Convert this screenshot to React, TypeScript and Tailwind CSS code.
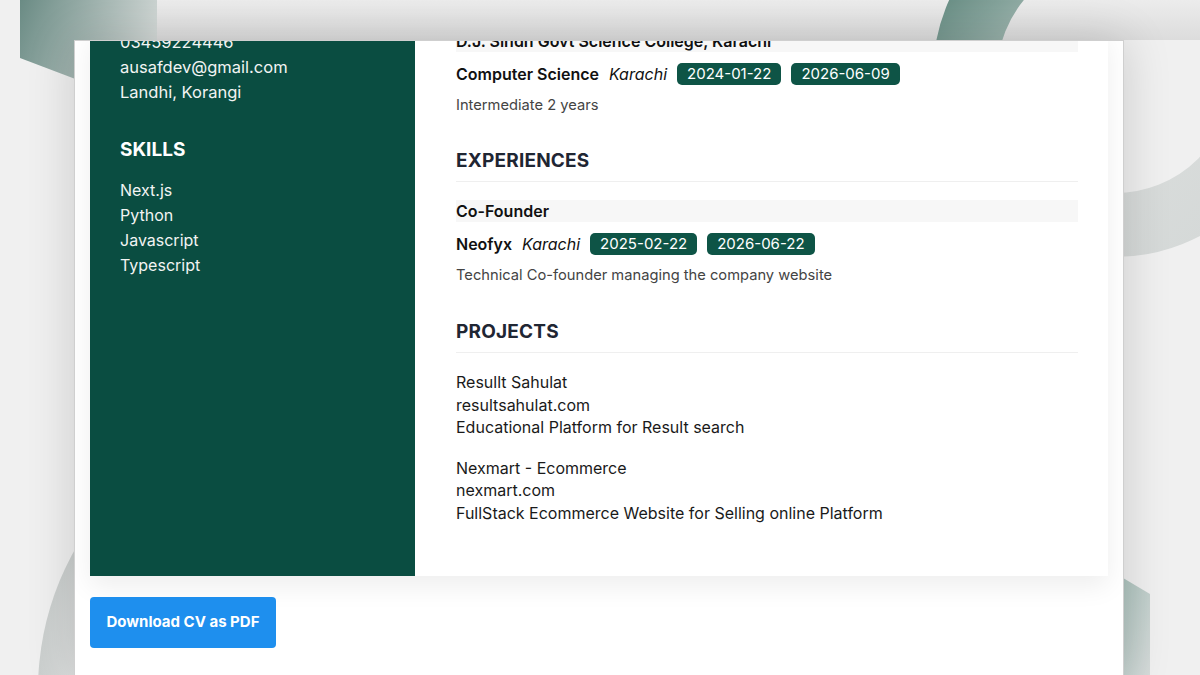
const contact = ["03459224446", "ausafdev@gmail.com", "Landhi, Korangi"];
const skills = ["Next.js", "Python", "Javascript", "Typescript"];

const projects = [
  {
    name: "Resullt Sahulat",
    url: "resultsahulat.com",
    desc: "Educational Platform for Result search",
  },
  {
    name: "Nexmart - Ecommerce",
    url: "nexmart.com",
    desc: "FullStack Ecommerce Website for Selling online Platform",
  },
];

function Backdrop() {
  return (
    <svg
      className="absolute inset-0 pointer-events-none"
      width="1200"
      height="675"
      viewBox="0 0 1200 675"
    >
      <defs>
        <linearGradient id="tl" x1="0" y1="0" x2="1" y2="0.3">
          <stop offset="0" stopColor="#6a8b84" />
          <stop offset="1" stopColor="#d3d9d7" />
        </linearGradient>
        <linearGradient id="ring" x1="0" y1="0" x2="1" y2="1">
          <stop offset="0" stopColor="#4f7c71" />
          <stop offset="0.3" stopColor="#a6bbb5" />
          <stop offset="0.6" stopColor="#dadddc" />
          <stop offset="1" stopColor="#d4d8d7" />
        </linearGradient>
        <radialGradient id="bl" cx="0.5" cy="0.5" r="0.5">
          <stop offset="0.8" stopColor="#e7e8e8" />
          <stop offset="1" stopColor="#cbcfce" />
        </radialGradient>
        <linearGradient id="br" x1="0" y1="0" x2="1" y2="1">
          <stop offset="0" stopColor="#a9c1bb" />
          <stop offset="1" stopColor="#d6dbda" />
        </linearGradient>
        <linearGradient id="top" x1="0" y1="0" x2="0" y2="1">
          <stop offset="0" stopColor="#ececec" />
          <stop offset="1" stopColor="#dcdcdc" />
        </linearGradient>
      </defs>
      <rect x="157" y="0" width="1043" height="40" fill="url(#top)" />
      <polygon points="20,0 157,0 157,110 20,58" fill="url(#tl)" />
      <circle cx="1115" cy="75" r="150" fill="none" stroke="url(#ring)" strokeWidth="64" />
      <circle cx="324" cy="690" r="286" fill="url(#bl)" />
      <polygon points="1118,575 1150,594 1150,675 1118,675" fill="url(#br)" />
    </svg>
  );
}

function Badge({ children }: { children: string }) {
  return (
    <span className="rounded-[5px] bg-[#0e5446] px-[10px] text-[15px] leading-[22px] text-white">
      {children}
    </span>
  );
}

function Heading({ children }: { children: string }) {
  return (
    <h2 className="border-b border-[#efefef] pb-[8px] text-[19px] font-bold leading-[24px] tracking-[0.2px] text-[#1f2633]">
      {children}
    </h2>
  );
}

export default function App() {
  return (
    <div
      className="relative h-[675px] w-[1200px] overflow-hidden bg-[#f0f0f0]"
      style={{ fontFamily: "Inter, 'Noto Sans', sans-serif" }}
    >
      <Backdrop />
      <div className="relative pl-[74px] pt-[40px]">
        <div className="h-[640px] w-[1050px] overflow-hidden border-l border-r border-t border-[#cfcfcf] bg-white px-[15px] shadow-[0_0_45px_rgba(0,0,0,0.16)]">
          {/* cv sheet, scrolled down a bit */}
          <div className="-mt-[11px] flex w-[1018px] shadow-[0_10px_25px_rgba(0,0,0,0.07)]">
            <aside className="w-[325px] shrink-0 bg-[#0a4d41] px-[30px] text-[#f2f4f3]">
              <ul className="text-[16.5px] leading-[25px]">
                {contact.map((c) => (
                  <li key={c}>{c}</li>
                ))}
              </ul>
              <h3 className="mt-[31px] text-[19px] font-bold leading-[28px] text-white">
                SKILLS
              </h3>
              <ul className="mt-[14px] text-[16px] leading-[25px]">
                {skills.map((s) => (
                  <li key={s}>{s}</li>
                ))}
              </ul>
            </aside>

            <main className="flex-1 bg-white pb-[52px] pl-[41px] pr-[30px] text-[#111]">
              <div className="bg-[#f7f7f7] text-[16px] font-semibold leading-[22px]">
                D.J. Sindh Govt Science College, Karachi
              </div>
              <div className="mt-[11px] flex items-center gap-[10px] text-[16px] leading-[22px]">
                <span className="font-semibold">Computer Science</span>
                <span className="italic">Karachi</span>
                <Badge>2024-01-22</Badge>
                <Badge>2026-06-09</Badge>
              </div>
              <p className="mt-[10px] text-[14.7px] leading-[20px] text-[#444]">Intermediate 2 years</p>

              <div className="mt-[34px]">
                <Heading>EXPERIENCES</Heading>
              </div>
              <div className="mt-[18px] bg-[#f7f7f7] text-[16px] font-semibold leading-[22px]">
                Co-Founder
              </div>
              <div className="mt-[11px] flex items-center gap-[10px] text-[16px] leading-[22px]">
                <span className="font-semibold">Neofyx</span>
                <span className="italic">Karachi</span>
                <Badge>2025-02-22</Badge>
                <Badge>2026-06-22</Badge>
              </div>
              <p className="mt-[10px] text-[14.7px] leading-[20px] text-[#444]">
                Technical Co-founder managing the company website
              </p>

              <div className="mt-[35px]">
                <Heading>PROJECTS</Heading>
              </div>
              <div className="mt-[18px] flex flex-col gap-[18px] text-[16px] leading-[22.5px] text-[#1a1a1a]">
                {projects.map((p) => (
                  <div key={p.name}>
                    <div>{p.name}</div>
                    <div>{p.url}</div>
                    <div>{p.desc}</div>
                  </div>
                ))}
              </div>
            </main>
          </div>

          <button className="mt-[21px] h-[51px] w-[186px] rounded-[4px] bg-[#1e8fee] text-[15px] font-bold text-white">
            Download CV as PDF
          </button>
        </div>
      </div>
    </div>
  );
}
